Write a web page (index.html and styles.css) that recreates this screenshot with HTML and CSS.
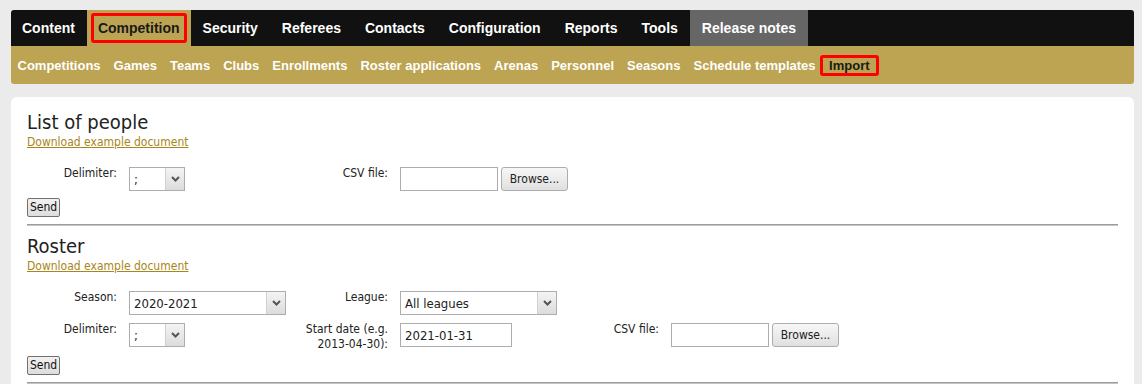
FILE: index.html
```html
<!DOCTYPE html>
<html lang="en">
<head>
    <meta charset="UTF-8">
    <title>Import</title>
    <link rel="stylesheet" href="styles.css">
</head>
<body>
    <nav class="menu">
        <ul class="top">
            <li><a href="#">Content</a></li>
            <li class="active"><a href="#"><span>Competition</span></a></li>
            <li><a href="#">Security</a></li>
            <li><a href="#">Referees</a></li>
            <li><a href="#">Contacts</a></li>
            <li><a href="#">Configuration</a></li>
            <li><a href="#">Reports</a></li>
            <li><a href="#">Tools</a></li>
            <li class="notes"><a href="#">Release notes</a></li>
        </ul>
        <ul class="sub">
            <li><a href="#">Competitions</a></li>
            <li><a href="#">Games</a></li>
            <li><a href="#">Teams</a></li>
            <li><a href="#">Clubs</a></li>
            <li><a href="#">Enrollments</a></li>
            <li><a href="#">Roster applications</a></li>
            <li><a href="#">Arenas</a></li>
            <li><a href="#">Personnel</a></li>
            <li><a href="#">Seasons</a></li>
            <li><a href="#">Schedule templates</a></li>
            <li class="active"><a href="#">Import</a></li>
        </ul>
    </nav>

    <div class="panel">
        <!-- people -->
        <section class="import">
            <h2>List of people</h2>
            <a class="example" href="#">Download example document</a>
            <form class="import-form">
                <div class="fields">
                    <label>Delimiter:</label>
                    <div class="select narrow"><span class="value">;</span><span class="arrow"><svg width="9" height="6" viewBox="0 0 9 6"><polyline points="1,1 4.5,4.5 8,1" fill="none" stroke="#555" stroke-width="2"/></svg></span></div>
                    <label>CSV file:</label>
                    <div class="file span3"><span class="file-box"></span><button type="button" class="browse">Browse...</button></div>
                </div>
                <button type="button" class="send">Send</button>
            </form>
            <hr>
        </section>

        <!-- roster -->
        <section class="import">
            <h2>Roster</h2>
            <a class="example" href="#">Download example document</a>
            <form class="import-form">
                <div class="fields">
                    <label>Season:</label>
                    <div class="select wide"><span class="value">2020-2021</span><span class="arrow"><svg width="9" height="6" viewBox="0 0 9 6"><polyline points="1,1 4.5,4.5 8,1" fill="none" stroke="#555" stroke-width="2"/></svg></span></div>
                    <label>League:</label>
                    <div class="select wide"><span class="value">All leagues</span><span class="arrow"><svg width="9" height="6" viewBox="0 0 9 6"><polyline points="1,1 4.5,4.5 8,1" fill="none" stroke="#555" stroke-width="2"/></svg></span></div>
                    <span></span><span></span>

                    <label>Delimiter:</label>
                    <div class="select narrow"><span class="value">;</span><span class="arrow"><svg width="9" height="6" viewBox="0 0 9 6"><polyline points="1,1 4.5,4.5 8,1" fill="none" stroke="#555" stroke-width="2"/></svg></span></div>
                    <label>Start date (e.g. 2013-04-30):</label>
                    <div><input type="text" class="text" value="2021-01-31"></div>
                    <label>CSV file:</label>
                    <div class="file"><span class="file-box"></span><button type="button" class="browse">Browse...</button></div>
                </div>
                <button type="button" class="send">Send</button>
            </form>
            <hr>
        </section>
    </div>
</body>
</html>
```

FILE: styles.css
```css
body {
    margin: 0;
    padding: 10px 8px 0 11px;
    background-color: #ebebeb;
    font-family: "DejaVu Sans Condensed", "DejaVu Sans", sans-serif;
    font-stretch: condensed;
    color: #222;
}
/* menu */
.menu {
    border-radius: 3px;
    overflow: hidden;
}
.menu ul {
    list-style: none;
    margin: 0;
    padding: 0;
    display: flex;
}
.top {
    background-color: #111;
    height: 36px;
}
.top a {
    display: flex;
    align-items: center;
    box-sizing: border-box;
    height: 36px;
    padding: 0 12px;
    color: #fff;
    font: bold 14px "Liberation Sans", Arial, sans-serif;
    text-decoration: none;
}
.top li:first-child a {
    padding-left: 11px;
}
.top .active a {
    background-color: #bca452;
    color: #1a1a1a;
    padding: 3px 4px;
}
.top .active span {
    display: flex;
    align-items: center;
    box-sizing: border-box;
    height: 100%;
    padding: 0 4px;
    border: 3px solid #f00;
    border-radius: 3px;
}
.top .notes a {
    background-color: #666;
}
.sub {
    background-color: #bca452;
    height: 38px;
    align-items: center;
}
.sub a {
    display: block;
    padding: 0 3.5px;
    border: 3px solid transparent;
    border-radius: 3px;
    line-height: 22px;
    color: #fff;
    font: bold 13px "Liberation Sans", Arial, sans-serif;
    text-decoration: none;
}
.sub .active a {
    border-color: #f00;
    color: #1a1a1a;
    padding: 0 6px;
    margin-left: -2px;
}
/* content panel */
.panel {
    margin-top: 13px;
    background-color: #fff;
    border-radius: 6px;
    padding: 12px 16px 1px;
}
.import h2 {
    margin: 0;
    font-size: 20px;
    line-height: 26px;
    font-weight: normal;
    color: #222;
}
.example {
    display: block;
    width: max-content;
    font-size: 12px;
    line-height: 15px;
    color: #a8861a;
}
.import-form {
    margin: 17px 0 0;
}
.fields {
    display: grid;
    grid-template-columns: 90px 157px 90px 157px 90px auto;
    gap: 8px 12px;
    margin-bottom: 7px;
}
.fields label {
    font-size: 12px;
    line-height: 15px;
    text-align: right;
    margin: -1px 0 -3px;
}
.span3 {
    grid-column: span 3;
}
.select {
    display: flex;
    box-sizing: border-box;
    height: 24px;
    border: 1px solid #abadb3;
    background-color: #fff;
}
.select.narrow {
    width: 56px;
}
.select.wide {
    width: 157px;
}
.select .value {
    flex: 1;
    padding: 0 4px;
    font-size: 13px;
    line-height: 23px;
}
.select .arrow {
    width: 18px;
    display: flex;
    align-items: center;
    justify-content: center;
    border-left: 1px solid #d0d0d0;
    background: linear-gradient(#f4f4f4, #dcdcdc);
}
.text {
    box-sizing: border-box;
    width: 112px;
    height: 24px;
    margin: 0;
    padding: 0 4px;
    border: 1px solid #abadb3;
    font-family: inherit;
    font-stretch: condensed;
    font-size: 13px;
    color: #222;
}
.file {
    display: flex;
    gap: 3px;
    white-space: nowrap;
}
.file-box {
    box-sizing: border-box;
    flex-shrink: 0;
    width: 98px;
    height: 24px;
    border: 1px solid #abadb3;
    background-color: #fff;
}
.browse {
    flex-shrink: 0;
    box-sizing: border-box;
    width: 67px;
    height: 24px;
    padding: 0;
    border: 1px solid #adadad;
    border-radius: 3px;
    background: linear-gradient(#f7f7f7, #e0e0e0);
    font-family: inherit;
    font-stretch: condensed;
    font-size: 12px;
    color: #222;
}
.send {
    display: block;
    margin: 0;
    padding: 1px 2px;
    border: 1px solid #707070;
    border-radius: 2px;
    background: linear-gradient(#f2f2f2, #dddddd);
    font-family: inherit;
    font-stretch: condensed;
    font-size: 12px;
    line-height: 15px;
    color: #111;
}
.import hr {
    margin: 7px 0 7px;
    border: 0;
    border-top: 1px solid #9c9c9c;
    border-bottom: 1px solid #c4c4c4;
}
```
